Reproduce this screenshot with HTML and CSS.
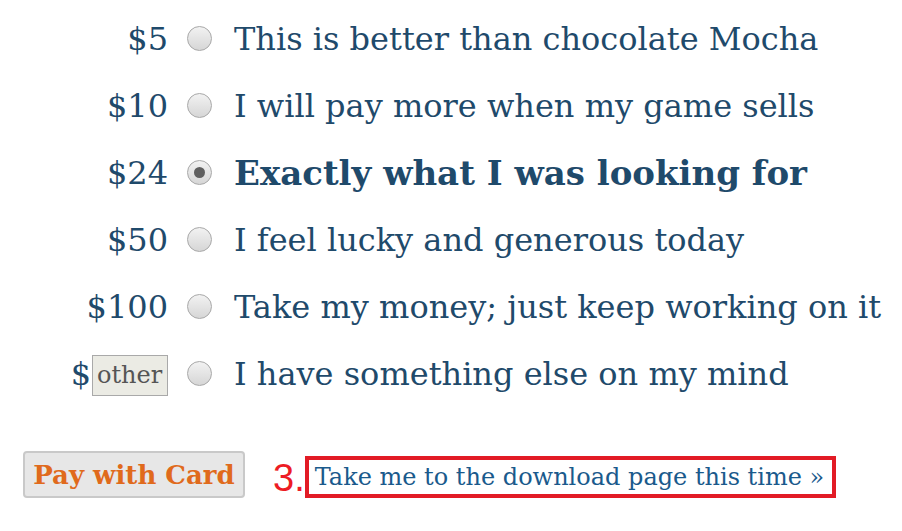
FILE: index.html
```html
<!DOCTYPE html>
<html>
<head>
<meta charset="utf-8">
<link rel="stylesheet" href="styles.css">
</head>
<body>
<form class="pay">
  <div class="options">
    <label class="opt"><span class="price">$5</span><input class="radio" type="radio" name="amt"><span class="desc">This is better than chocolate Mocha</span></label>
    <label class="opt"><span class="price">$10</span><input class="radio" type="radio" name="amt"><span class="desc">I will pay more when my game sells</span></label>
    <label class="opt sel"><span class="price">$24</span><input class="radio" type="radio" name="amt" checked><span class="desc">Exactly what I was looking for</span></label>
    <label class="opt"><span class="price">$50</span><input class="radio" type="radio" name="amt"><span class="desc">I feel lucky and generous today</span></label>
    <label class="opt"><span class="price">$100</span><input class="radio" type="radio" name="amt"><span class="desc">Take my money; just keep working on it</span></label>
    <label class="opt"><span class="price">$<span class="other">other</span></span><input class="radio" type="radio" name="amt"><span class="desc">I have something else on my mind</span></label>
  </div>
  <div class="actions">
    <button type="button" class="card">Pay with Card</button>
    <span class="step">3.</span>
    <a class="dl" href="#">Take me to the download page this time »</a>
  </div>
</form>
</body>
</html>
```
FILE: styles.css
```css
html, body {
  margin: 0;
  padding: 0;
  background: #ffffff;
}
body {
  font-family: "DejaVu Serif", "Liberation Serif", serif;
  color: #1f4a6b;
  width: 902px;
  height: 531px;
  overflow: hidden;
}
.pay {
  padding-top: 5px;
}
.options {
  display: flex;
  flex-direction: column;
}
.opt {
  display: grid;
  grid-template-columns: 168px 25px auto;
  column-gap: 19px;
  align-items: center;
  height: 67px;
  font-size: 32px;
  white-space: nowrap;
}
.opt .desc {
  margin-left: 3px;
}
.price {
  display: flex;
  justify-content: flex-end;
  align-items: center;
}
.sel .desc {
  font-weight: bold;
  font-size: 34px;
}
.other {
  display: inline-block;
  box-sizing: border-box;
  width: 76px;
  height: 41px;
  line-height: 39px;
  border: 1px solid #a9a9a9;
  background: #ebebe4;
  color: #555555;
  font-size: 24px;
  text-align: left;
  padding-left: 4px;
  margin-left: 1px;
  margin-top: 4px;
}
.radio {
  appearance: none;
  -webkit-appearance: none;
  margin: 0;
  width: 25px;
  height: 25px;
  border-radius: 50%;
  border: 1px solid #a8a8a8;
  background: linear-gradient(#f2f2f2, #d6d6d6);
  box-sizing: border-box;
  position: relative;
}
.radio:checked::after {
  content: "";
  position: absolute;
  left: 6px;
  top: 6px;
  width: 11px;
  height: 11px;
  border-radius: 50%;
  background: #5f5f5f;
}
.actions {
  display: flex;
  align-items: center;
  margin-top: 44px;
  padding-left: 23px;
}
.card {
  width: 222px;
  height: 47px;
  border: 2px solid #c9c9c9;
  border-radius: 4px;
  background: #e7e7e7;
  color: #e06a1c;
  font-family: "DejaVu Serif", "Liberation Serif", serif;
  font-weight: bold;
  font-size: 26px;
  padding: 0;
}
.step {
  margin-left: 28px;
  font-family: "Liberation Sans", Arial, sans-serif;
  font-size: 38px;
  color: #ed1c24;
  line-height: 1;
  margin-top: 6px;
}
.dl {
  border: 4px solid #e21b25;
  padding: 0 8px 0 6px;
  height: 34px;
  line-height: 34px;
  font-size: 24px;
  color: #1a5a8c;
  text-decoration: none;
  white-space: nowrap;
  margin-top: 5px;
}
```
